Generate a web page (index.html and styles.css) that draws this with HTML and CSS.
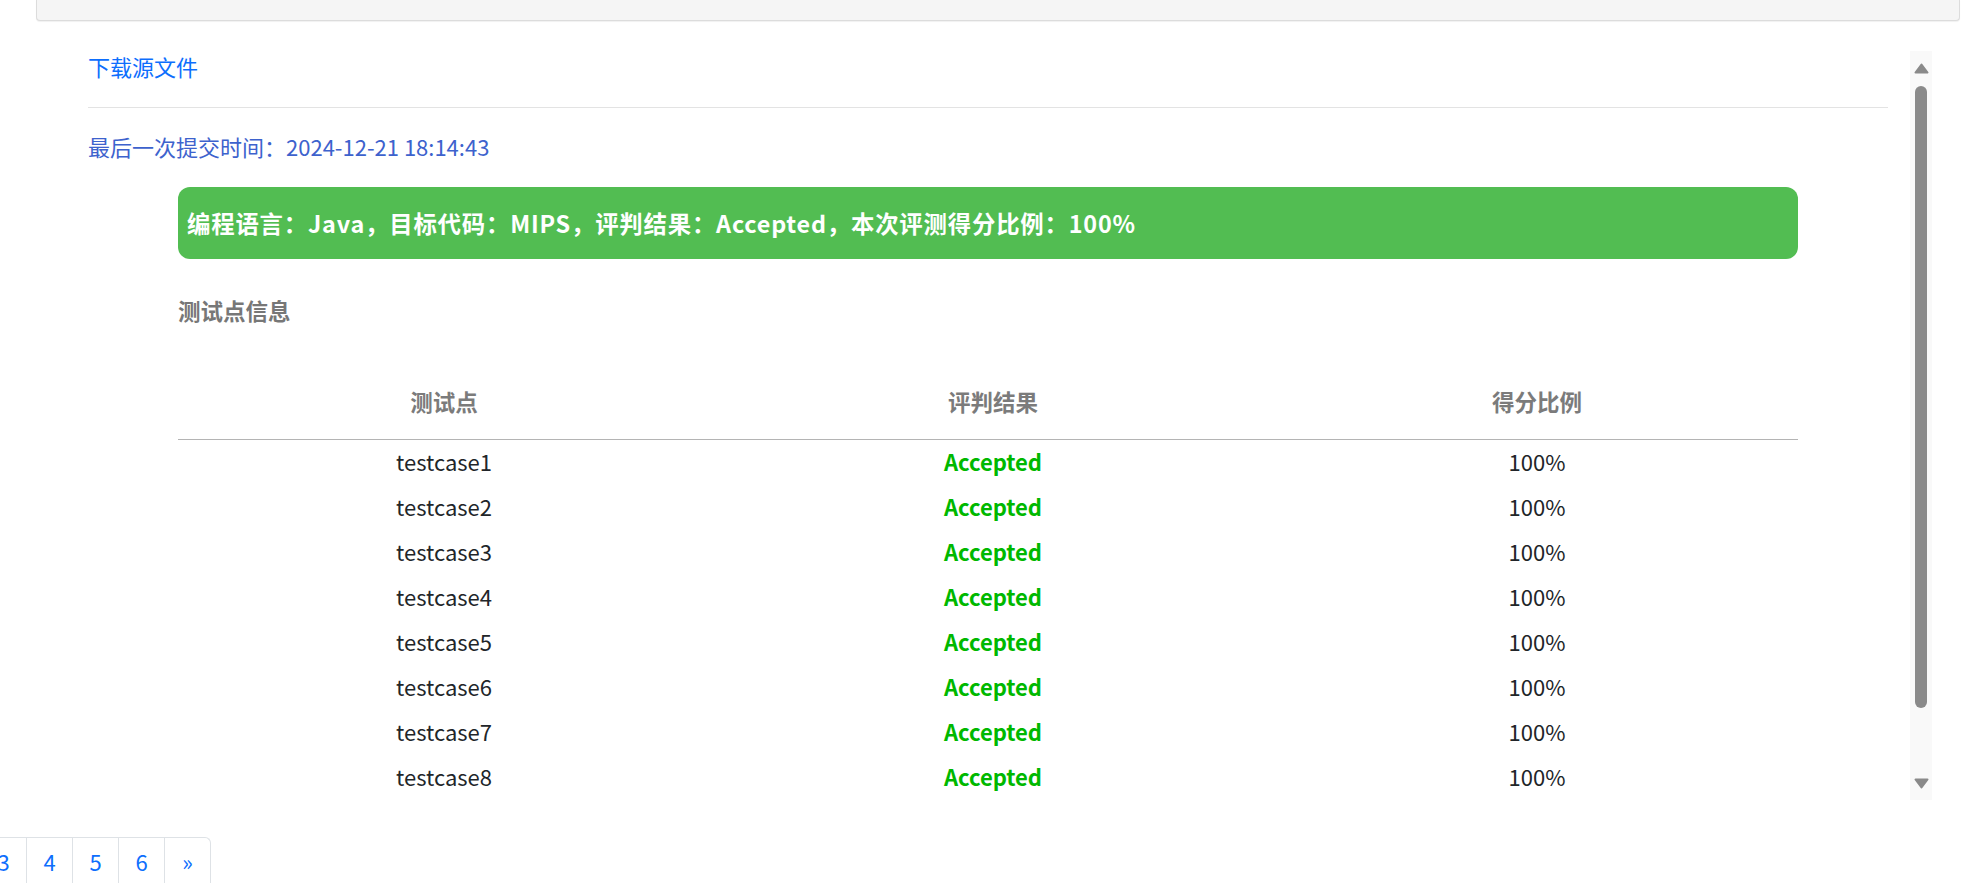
FILE: index.html
```html
<!DOCTYPE html>
<html lang="zh-CN">
<head>
<meta charset="utf-8">
<title>提交详情</title>
<link rel="stylesheet" href="styles.css">
</head>
<body>
<div class="topbar"></div>
<div class="main">
  <div class="content">
    <a class="download" href="#">下载源文件</a>
    <hr class="divider">
    <div class="submit-time">最后一次提交时间：2024-12-21 18:14:43</div>
    <div class="result">
      <div class="banner">编程语言：Java，目标代码：MIPS，评判结果：Accepted，本次评测得分比例：100%</div>
      <div class="section-title">测试点信息</div>
      <table class="cases">
        <colgroup><col class="c1"><col class="c2"><col class="c3"></colgroup>
        <thead>
          <tr><th>测试点</th><th>评判结果</th><th>得分比例</th></tr>
        </thead>
        <tbody>
          <tr><td>testcase1</td><td class="ac">Accepted</td><td>100%</td></tr>
          <tr><td>testcase2</td><td class="ac">Accepted</td><td>100%</td></tr>
          <tr><td>testcase3</td><td class="ac">Accepted</td><td>100%</td></tr>
          <tr><td>testcase4</td><td class="ac">Accepted</td><td>100%</td></tr>
          <tr><td>testcase5</td><td class="ac">Accepted</td><td>100%</td></tr>
          <tr><td>testcase6</td><td class="ac">Accepted</td><td>100%</td></tr>
          <tr><td>testcase7</td><td class="ac">Accepted</td><td>100%</td></tr>
          <tr><td>testcase8</td><td class="ac">Accepted</td><td>100%</td></tr>
        </tbody>
      </table>
    </div>
  </div>
  <div class="scrollbar">
    <svg class="arrow" width="15" height="11" viewBox="0 0 15 11"><polygon points="7.5,1.5 13.5,9.5 1.5,9.5" fill="#8a8a8a" stroke="#8a8a8a" stroke-width="2" stroke-linejoin="round"/></svg>
    <div class="thumb"></div>
    <div class="track-rest"></div>
    <svg class="arrow" width="15" height="11" viewBox="0 0 15 11"><polygon points="1.5,1.5 13.5,1.5 7.5,9.5" fill="#8a8a8a" stroke="#8a8a8a" stroke-width="2" stroke-linejoin="round"/></svg>
  </div>
</div>
<ul class="pagination">
  <li>«</li><li>1</li><li>2</li><li>3</li><li>4</li><li>5</li><li>6</li><li>»</li>
</ul>
</body>
</html>
```
FILE: styles.css
```css
html, body {
  margin: 0;
  padding: 0;
  background: #fff;
  overflow: hidden;
}
body {
  width: 1966px;
  height: 883px;
  font-family: "Noto Sans CJK SC", "Noto Sans", sans-serif;
  font-size: 22px;
  color: #212529;
}
.topbar {
  margin-left: 36px;
  width: 1922px;
  height: 20px;
  background: #f5f5f5;
  border: 1px solid #dcdcdc;
  border-top: none;
  border-radius: 0 0 4px 4px;
  box-shadow: 0 1px 1px rgba(0,0,0,0.06);
}
.main {
  display: flex;
  margin-top: 30px;
  height: 749px;
}
.content {
  width: 1800px;
  margin-left: 88px;
  margin-right: 22px;
  overflow: hidden;
  padding-top: 0;
}
.download {
  display: block;
  line-height: 30px;
  color: #0d6efd;
  text-decoration: none;
  font-size: 22px;
}
.divider {
  margin: 26px 0 0;
  border: none;
  border-top: 1px solid #e3e3e3;
  height: 0;
}
.submit-time {
  margin-top: 23px;
  line-height: 30px;
  color: #3d62cd;
  font-size: 22px;
}
.result {
  margin-left: 90px;
  width: 1620px;
}
.banner {
  margin-top: 26px;
  background: #52bd52;
  color: #fff;
  font-weight: bold;
  font-size: 23.4px;
  letter-spacing: 0.8px;
  line-height: 32px;
  padding: 20px 9px;
  border-radius: 12px;
}
.section-title {
  margin-top: 36px;
  line-height: 30px;
  font-size: 22.5px;
  font-weight: bold;
  color: #777;
}
.cases {
  margin-top: 38px;
  width: 100%;
  border-collapse: collapse;
  table-layout: fixed;
}
.cases col.c1 { width: 532px; }
.cases col.c2 { width: 566px; }
.cases col.c3 { width: 522px; }
.cases th {
  padding: 23px 0;
  line-height: 30px;
  font-size: 22.5px;
  font-weight: bold;
  color: #7b7b7b;
  text-align: center;
  border-bottom: 1px solid #b4b4b4;
}
.cases td {
  padding: 0 0 3px;
  height: 42px;
  line-height: 42px;
  text-align: center;
  font-size: 22px;
  color: #212529;
}
.cases td.ac {
  color: #00b800;
  font-weight: bold;
}
.scrollbar {
  width: 22px;
  height: 749px;
  background: #f9f9f9;
  display: flex;
  flex-direction: column;
  align-items: center;
  padding-top: 12px;
  padding-bottom: 11px;
  box-sizing: border-box;
}
.arrow {
  display: block;
  flex: none;
}
.thumb {
  margin-top: 12px;
  width: 12px;
  height: 622px;
  background: #8a8a8a;
  border-radius: 6px;
  flex: none;
}
.track-rest {
  flex: 1;
}
.pagination {
  list-style: none;
  display: flex;
  margin: 37px 0 0 -158px;
  padding: 0;
}
.pagination li {
  width: 45px;
  height: 46px;
  line-height: 46px;
  text-align: center;
  border: 1px solid #dee2e6;
  border-right: none;
  border-bottom: none;
  color: #0d6efd;
  font-size: 22px;
}
.pagination li:last-child {
  border-right: 1px solid #dee2e6;
  border-top-right-radius: 6px;
}
```
